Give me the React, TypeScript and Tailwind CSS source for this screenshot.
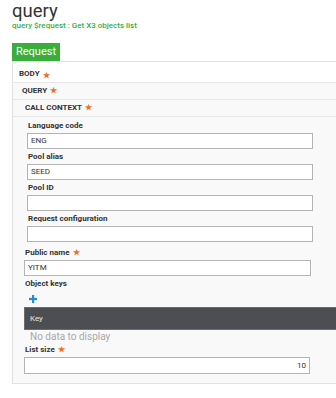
import React from "react";

const Star = () => <span className="text-[#f26c21] text-[8px] ml-[3px] leading-none">★</span>;

function Field({ label, value = "", star = false, right = false, inputClass = "h-[16px]" }: { label: string; value?: string; star?: boolean; right?: boolean; inputClass?: string }) {
  return (
    <div className="flex flex-col">
      <div className="h-[12px] leading-[12px] text-[8px] font-bold text-[#333] flex items-center pl-[1px]">
        {label}
        {star && <Star />}
      </div>
      <div className={`mt-[1px] ${inputClass} border border-[#b4b4b4] bg-white text-[8px] text-[#333] flex items-center px-[3px] ${right ? "justify-end" : ""}`}>
        {value}
      </div>
    </div>
  );
}

export default function App() {
  return (
    <div className="w-[336px] h-[398px] overflow-hidden bg-white" style={{ fontFamily: 'Roboto, "Open Sans", sans-serif' }}>
      <div className="pl-[12px]">
        <div className="text-[18.5px] leading-[20px] h-[21px] pt-[1px] text-[#333]">query</div>
        <div className="text-[8px] leading-[10px] h-[10px] text-[#35b040] font-medium">query $request : Get X3 objects list</div>
        <div className="mt-[12px] flex">
          <div className="bg-[#3aae3a] text-white text-[11px] leading-[18px] h-[18px] px-[4px]">Request</div>
        </div>
        <div className="w-[360px] border-t border-l border-b border-[#e2e2e2] bg-[#f9f9f9]">
          <div className="h-[21px] bg-white border-b border-[#e6e6e6] pl-[6px] flex items-end pb-[2px] text-[8px] font-bold text-[#333]">
            BODY<Star />
          </div>
          <div className="h-[17px] border-b border-[#e6e6e6] pl-[9px] flex items-center text-[8px] font-bold text-[#333]">
            QUERY<Star />
          </div>
          <div className="h-[17px] border-b border-[#e6e6e6] pl-[12px] flex items-center text-[8px] font-bold text-[#333]">
            CALL CONTEXT<Star />
          </div>
          <div className="pl-[14px] w-[300px] pt-[3px] flex flex-col gap-[2px]">
            <Field label="Language code" value="ENG" />
            <Field label="Pool alias" value="SEED" />
            <Field label="Pool ID" />
            <Field label="Request configuration" />
          </div>
          <div className="pl-[11px] w-[298px] mt-[5px]">
            <Field label="Public name" value="YITM" star />
          </div>
          <div className="pl-[11px] mt-[2px]">
            <div className="h-[12px] leading-[12px] text-[8px] font-bold text-[#333] pl-[1px]">Object keys</div>
            <div className="h-[17px] flex items-center pl-[5px]">
              <svg width="8" height="8" viewBox="0 0 8 8">
                <rect x="3" y="0" width="2.2" height="8" fill="#1e8fd6" />
                <rect x="0" y="2.9" width="8" height="2.2" fill="#1e8fd6" />
              </svg>
            </div>
            <div className="h-[23px] bg-[#4c4e51] border border-[#6a6c70] flex items-center pl-[5px] text-[8px] text-[#e8e8e8]">Key</div>
            <div className="h-[14px] leading-[14px] pl-[6px] text-[10px] text-[#a8a8a8]">No data to display</div>
          </div>
          <div className="pl-[11px] w-[297px] pb-[9px]">
            <Field label="List size" value="10" star right inputClass="h-[17px]" />
          </div>
        </div>
      </div>
    </div>
  );
}
